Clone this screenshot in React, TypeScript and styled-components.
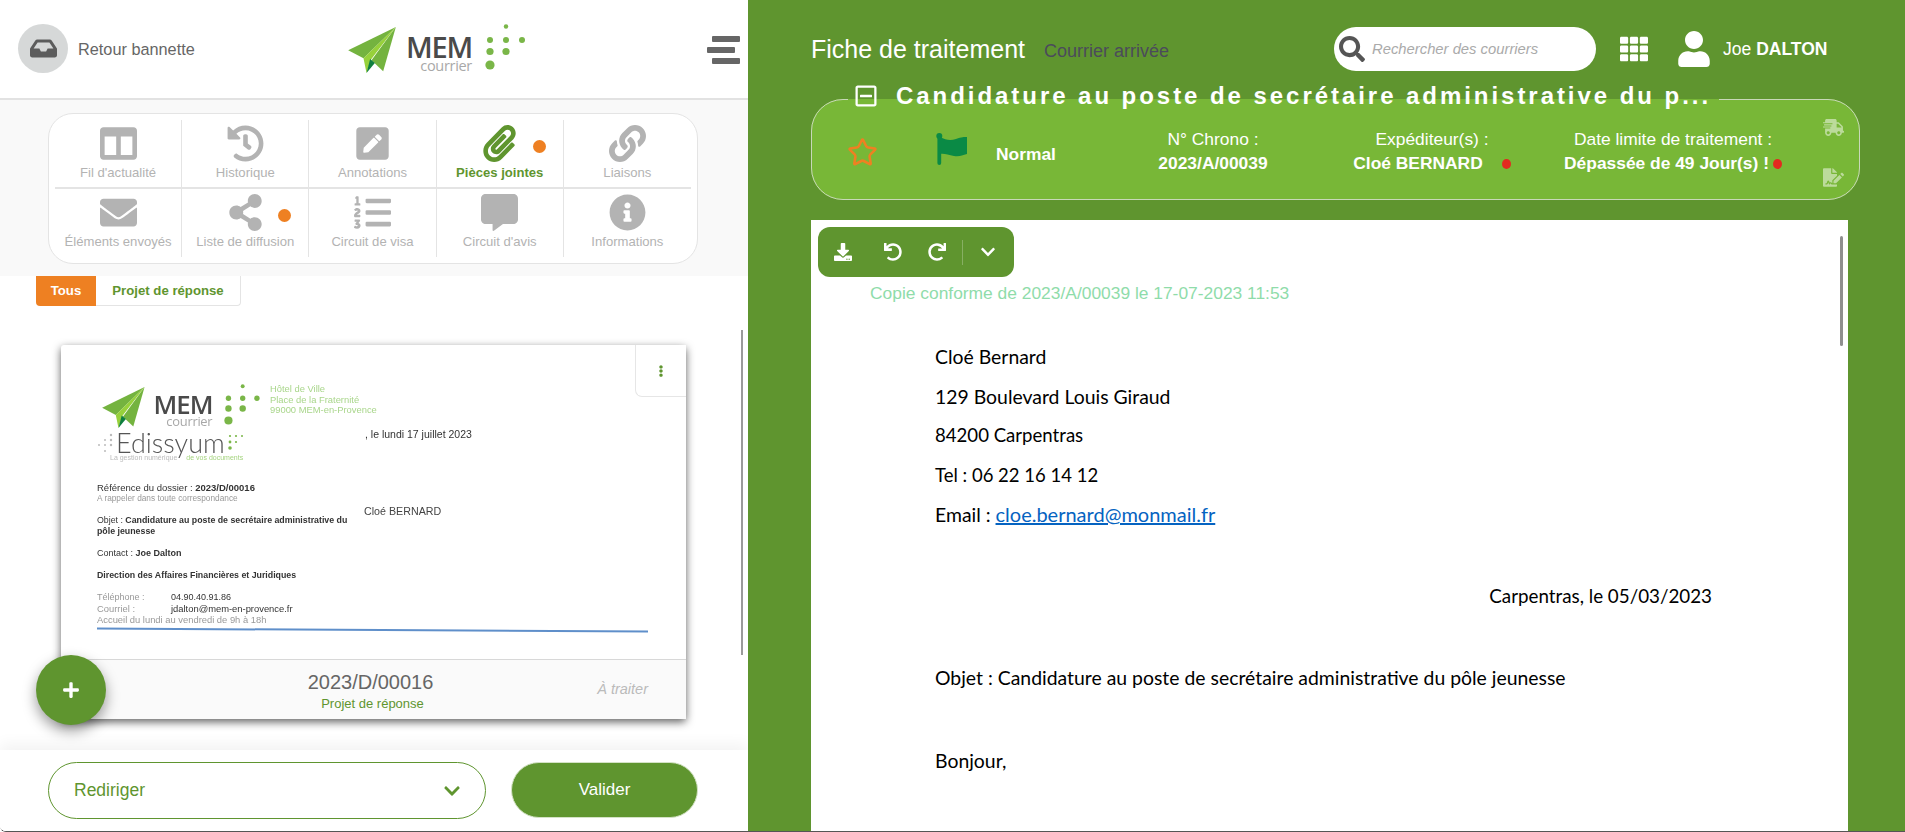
import React from "react";
import styled, { createGlobalStyle } from "styled-components";
import { Star } from "lucide-react";
import {
  FaInbox, FaColumns, FaHistory, FaPenSquare, FaPaperclip, FaLink, FaEnvelope, FaShareAlt, FaListOl,
  FaCommentAlt, FaInfoCircle, FaEllipsisV, FaPlus, FaChevronDown, FaSearch, FaTh, FaUser, FaRegMinusSquare,
  FaShippingFast, FaFileSignature, FaDownload, FaUndo, FaRedo,
} from "react-icons/fa";

const GREEN = "#5f952f";
const sans = `"Liberation Sans", Arial, sans-serif`;

const Global = createGlobalStyle`
  html, body { margin: 0; padding: 0; height: 100%; overflow: hidden; background: #fff; }
  * { box-sizing: border-box; }
  body { font-family: ${sans}; }
`;

const Page = styled.div`
  display: flex; width: 1905px; height: 832px; overflow: hidden; border-bottom: 1px solid #555; border-bottom-left-radius: 6px;
`;

const Left = styled.section`
  position: relative; width: 748px; height: 831px; display: flex; flex-direction: column; background: #fff; overflow: hidden;
`;
const TopBar = styled.header`
  height: 100px; flex: none; display: flex; align-items: center; border-bottom: 2px solid #e2e2e2;
  padding: 0 8px 2px 18px; position: relative; justify-content: space-between;
`;
const BackLink = styled.div`display: flex; align-items: center; gap: 10px; color: #666; font-size: 16.3px; width: 330px;`;
const BackLabel = styled.span`padding-top: 3px;`;
const BackCircle = styled.div`
  width: 50px; height: 49px; border-radius: 50%; background: #d6d8d8; color: #5c5c5c;
  display: flex; align-items: center; justify-content: center; font-size: 27px; margin-top: 1px;
`;
const Burger = styled.div`display: flex; flex-direction: column; width: 33px; gap: 5px; margin-top: 3px;`;
const BurgerBar = styled.span<{ $shift?: boolean }>`
  display: block; width: 28px; height: 6px; background: #666; border-radius: 1px;
  align-self: ${(p) => (p.$shift ? "flex-start" : "flex-end")};
`;
const BrandSlot = styled.div`padding-top: 7px; margin-right: auto;`;

const LogoWrap = styled.div<{ $scale: number }>`
  display: flex; align-items: flex-start; width: 180px; height: 50px; zoom: ${(p) => p.$scale};
`;
const LogoWords = styled.div`
  display: flex; flex-direction: column; align-items: flex-end; margin: 6px 0 0 10px; width: 66px;
  font-family: "Open Sans", sans-serif;
`;
const LogoMem = styled.span`font-size: 29px; line-height: 27px; color: #4a4a4a; font-weight: 600; letter-spacing: -1.2px;`;
const LogoSub = styled.span`font-size: 14.5px; line-height: 15px; color: #a8a8a8; letter-spacing: -.3px; margin-top: -2px;`;
const LogoDots = styled.svg`margin: -3px 0 0 13px; flex: none;`;
const LogoPlane = styled.svg`flex: none;`;

function Logo({ scale }: { scale: number }) {
  return (
    <LogoWrap $scale={scale}>
      <LogoPlane width="48" height="46" viewBox="0 0 143 138">
        <polygon points="0,70 143,0 46,94" fill="#74b33f" />
        <polygon points="143,0 46,94 55,138 68,98" fill="#97d13b" />
        <polygon points="143,0 105,133 70,100" fill="#74b33f" />
        <polygon points="55,138 66,96 80,108" fill="#0f7f3f" />
      </LogoPlane>
      <LogoWords>
        <LogoMem>MEM</LogoMem>
        <LogoSub>courrier</LogoSub>
      </LogoWords>
      <LogoDots width="42" height="46" viewBox="0 0 42 46" fill="#7ab648">
        <circle cx="21" cy="2.5" r="2.2" />
        <circle cx="5" cy="16" r="3" /><circle cx="21" cy="16" r="3" /><circle cx="37" cy="16" r="3" />
        <circle cx="5" cy="27.5" r="3.6" /><circle cx="21" cy="27.5" r="3.6" />
        <circle cx="5" cy="41" r="4.6" />
      </LogoDots>
    </LogoWrap>
  );
}

const TabZone = styled.div`height: 176px; flex: none; background: #f9f9f9; padding: 13px 0 0 48px;`;
const TabBox = styled.nav`
  width: 650px; height: 151px; background: #fff; border: 1px solid #e4e4e4; border-radius: 25px; padding: 6px;
  display: grid; grid-template-columns: repeat(5, 1fr); grid-template-rows: 69px 68px;
`;
const Tab = styled.div<{ $active?: boolean; $lastCol?: boolean; $topRow?: boolean }>`
  position: relative; display: flex; flex-direction: column; align-items: center; justify-content: flex-start;
  color: ${(p) => (p.$active ? GREEN : "#b3b3b3")}; font-size: 13.1px; font-weight: ${(p) => (p.$active ? 700 : 400)};
  border-right: ${(p) => (p.$lastCol ? "none" : "1px solid #e4e4e4")};
  border-bottom: ${(p) => (p.$topRow ? "2px solid #e4e4e4" : "none")};
  padding-top: 5px;
`;
const TabIcon = styled.div`height: 37px; display: flex; align-items: center; justify-content: center; font-size: 37px; margin-bottom: 3px;`;
const Dot = styled.span`
  position: absolute; right: 17px; top: 20px; width: 13px; height: 13px; border-radius: 50%; background: #ee8022;
`;

const ListZone = styled.div`position: relative; flex: 1; min-height: 0; background: #fff;`;
const Filter = styled.div`display: flex; height: 30px; margin-left: 36px; width: fit-content; font-size: 13.2px; font-weight: 700;`;
const FilterOn = styled.div`
  width: 60px; background: #ee8022; color: #fff; display: flex; align-items: center; justify-content: center;
  border-radius: 0 0 0 4px; padding-bottom: 1px;
`;
const FilterOff = styled.div`
  width: 145px; background: #fff; color: ${GREEN}; display: flex; align-items: center; justify-content: center;
  border: 1px solid #e4e4e4; border-top: none; border-left: none; border-radius: 0 0 4px 0; padding-bottom: 1px;
`;
const Card = styled.article`
  position: relative; width: 625px; height: 374px; margin: 39px 0 0 61px; border-radius: 3px; background: #fff;
  box-shadow: 0 3px 9px rgba(0, 0, 0, .62); display: flex; flex-direction: column;
`;
const CardMenu = styled.div`
  position: absolute; top: 0; right: 0; width: 51px; height: 52px; background: #fff; color: ${GREEN}; font-size: 12px;
  border-left: 1px solid #e6e6e6; border-bottom: 1px solid #e6e6e6; border-bottom-left-radius: 7px;
  display: flex; align-items: center; justify-content: center;
`;
const Thumb = styled.div`flex: 1; padding: 42px 38px 0 36px; filter: blur(.45px); font-family: ${sans}; overflow: hidden;`;
const ThumbHead = styled.div`display: flex; height: 95px;`;
const ThumbBrand = styled.div`width: 173px; padding-left: 5px; flex: none;`;
const EdissyumRow = styled.div`display: flex; align-items: center; margin-left: -6px; height: 22px;`;
const Edissyum = styled.div`
  font-family: Lato, sans-serif; font-weight: 300; font-size: 27px; line-height: 22px; color: #555; margin: 0 2px 0 2px;
`;
const EdDots = styled.svg`flex: none;`;
const Tagline = styled.div`font-size: 7px; line-height: 8px; color: #bbb; margin-left: 8px; white-space: nowrap;`;
const TagGreen = styled.span`color: #a5d47f; margin-left: 9px;`;
const ThumbAddr = styled.div`display: flex; flex-direction: column; font-size: 9.4px; line-height: 10.6px; color: #a9d68b; margin-top: -3px;`;
const ThumbDate = styled.div`font-size: 10.5px; color: #333; margin: 13px 0 0 95px; white-space: nowrap;`;
const ThumbBody = styled.div`display: grid; grid-template-columns: 267px 1fr;`;
const ThumbLine = styled.div<{ $gray?: boolean; $gap?: number; $size?: number }>`
  font-size: ${(p) => p.$size ?? 9.4}px; line-height: 11px; color: ${(p) => (p.$gray ? "#999" : "#333")}; margin-top: ${(p) => p.$gap ?? 0}px;
  white-space: nowrap;
`;
const ThumbLabel = styled.span`display: inline-block; width: 74px;`;
const ThumbDark = styled.span`color: #333;`;
const ThumbTo = styled.div`font-size: 10.7px; color: #444; padding-top: 23px;`;
const ThumbRule = styled.div`height: 2px; background: #5f8fca; margin: 4px 0 0 0; width: 551px; transform: rotate(.3deg);`;
const CardFoot = styled.footer`
  position: relative; height: 60px; flex: none; background: #fafafa; border-top: 1px solid #d8d8d8;
  display: flex; flex-direction: column; align-items: center; padding: 11px 4px 0 0;
`;
const Chrono = styled.div`font-size: 20px; line-height: 22px; color: #666; margin-right: 2px;`;
const DocKind = styled.div`font-size: 13px; line-height: 16px; color: ${GREEN}; margin: 3px 0 0 2px;`;
const Status = styled.div`position: absolute; right: 38px; top: 21px; font-size: 14.5px; font-style: italic; color: #bbb;`;
const Fab = styled.button`
  position: absolute; left: 36px; top: 379px; width: 70px; height: 70px; border: none; border-radius: 50%; background: ${GREEN};
  color: #fff; font-size: 18px; display: flex; align-items: center; justify-content: center;
  box-shadow: 0 6px 14px rgba(0, 0, 0, .4);
`;
const ScrollLeft = styled.div`position: absolute; right: 5px; top: 54px; width: 2px; height: 325px; background: #9a9a9a;`;

const ActionBar = styled.div`
  position: relative; height: 81px; flex: none; background: #fff; display: flex; gap: 25px; padding: 12px 0 0 48px;
  box-shadow: 0 -6px 14px rgba(0, 0, 0, .05);
`;
const RedirectSelect = styled.div`
  width: 438px; height: 57px; border: 1px solid ${GREEN}; border-radius: 29px; color: ${GREEN}; font-size: 17.5px;
  display: flex; align-items: center; justify-content: space-between; padding: 0 24px 0 25px;
`;
const Validate = styled.button`
  width: 187px; height: 56px; border: 1px solid #d4e2c6; border-radius: 28px; background: ${GREEN}; color: #fff;
  font: 17px ${sans};
`;

const Right = styled.main`flex: 1; height: 831px; background: ${GREEN}; padding: 27px 45px 0 63px; display: flex; flex-direction: column; overflow: hidden;`;
const RightTop = styled.div`display: flex; align-items: center; height: 44px; color: #fff;`;
const PageTitle = styled.h1`font-size: 25px; font-weight: 400; margin: 0; line-height: 44px; white-space: nowrap;`;
const PageSub = styled.span`font-size: 18px; color: #4b4b5b; margin: 4px 0 0 19px; white-space: nowrap;`;
const Search = styled.div`
  margin-left: 165px; width: 262px; height: 44px; border-radius: 22px; background: #fff; display: flex; align-items: center;
  padding-left: 5px; color: #555; font-size: 26px; flex: none;
`;
const SearchText = styled.span`font-size: 14.8px; font-style: italic; color: #aaa; margin-left: 7px;`;
const Apps = styled.div`margin-left: 24px; font-size: 28px; display: flex; flex: none;`;
const UserIcon = styled.div`margin-left: 28px; font-size: 36px; display: flex; flex: none;`;
const UserName = styled.span`font-size: 17.5px; margin-left: 11px; white-space: nowrap;`;
const Strong = styled.b`font-weight: 700;`;

const Info = styled.fieldset`
  margin: 13px 0 0 0; padding: 0 0 4px 36px; width: 1049px; height: 116px; flex: none; min-width: 0; background: #78b737;
  border: 1px solid #c8d8b8; border-radius: 32px; display: flex; align-items: center; color: #fff; position: relative;
`;
const InfoLegend = styled.legend`
  margin-left: 0; padding: 0 8px 6px 6px; display: flex; align-items: center; gap: 18px; color: #fff; height: 30px;
  font-size: 24px; font-weight: 700; letter-spacing: 2.95px; white-space: nowrap;
`;
const StarCell = styled.div`width: 89px; color: #ee8022; display: flex; flex: none; margin: 2px 0 0 -1px;`;
const FlagCell = styled.div`width: 200px; flex: none; display: flex; align-items: center;`;
const FlagMark = styled.svg`margin-top: -4px; flex: none;`;
const FlagLabel = styled.span`font-size: 17.4px; font-weight: 700; color: #fff; margin: 6px 0 0 28px;`;
const InfoCol = styled.div<{ $w: number; $gap?: number }>`
  width: ${(p) => p.$w}px; margin-left: ${(p) => p.$gap ?? 0}px; flex: none; text-align: center; font-size: 17.4px; line-height: 24px; white-space: nowrap;
`;
const InfoValue = styled.div`font-weight: 700;`;
const Alert = styled.span<{ $gap: number }>`
  display: inline-block; width: 9px; height: 10px; border-radius: 50%; background: #e3291f; margin-left: ${(p) => p.$gap}px;
`;
const SideActions = styled.div`
  display: flex; flex-direction: column; gap: 29px; margin: 3px 0 0 36px; color: rgba(255, 255, 255, .5); font-size: 21px;
`;

const Doc = styled.div`position: relative; flex: 1; width: 1037px; min-height: 0; margin-top: 20px; background: #fff; padding: 7px 0 0 7px; overflow: hidden;`;
const DocBar = styled.div`
  width: 196px; height: 50px; background: ${GREEN}; border-radius: 12px; color: #fff; display: flex; align-items: center; font-size: 18px;
  padding-left: 16px;
`;
const DocBtn = styled.span<{ $w: number }>`width: ${(p) => p.$w}px; display: flex; flex: none;`;
const DocSep = styled.span`width: 1px; height: 25px; background: rgba(255, 255, 255, .25); margin: 0 17px 0 0; flex: none;`;
const Conform = styled.div`font-size: 17.4px; line-height: 20px; color: #8fdcaa; margin: 6px 0 0 52px; white-space: nowrap;`;
const Letter = styled.div`margin: 34px 0 0 117px; width: 777px; font-family: Lato, sans-serif; font-size: 19.4px; line-height: 39.5px; color: #000;`;
const LetterLine = styled.div<{ $gap?: number; $right?: boolean; $size?: number }>`
  margin-top: ${(p) => p.$gap ?? 0}px; text-align: ${(p) => (p.$right ? "right" : "left")}; white-space: nowrap;
  font-size: ${(p) => p.$size ?? 19.4}px;
`;
const Mail = styled.a`color: #0563c1; text-decoration: underline; font-size: 20px;`;
const DocScroll = styled.div`position: absolute; right: 5px; top: 16px; width: 3px; height: 110px; border-radius: 2px; background: #8f8f8f;`;

const tabs = [
  { label: "Fil d'actualité", icon: <FaColumns /> },
  { label: "Historique", icon: <FaHistory /> },
  { label: "Annotations", icon: <FaPenSquare /> },
  { label: "Pièces jointes", icon: <FaPaperclip />, active: true, dot: true },
  { label: "Liaisons", icon: <FaLink /> },
  { label: "Éléments envoyés", icon: <FaEnvelope /> },
  { label: "Liste de diffusion", icon: <FaShareAlt />, dot: true },
  { label: "Circuit de visa", icon: <FaListOl /> },
  { label: "Circuit d'avis", icon: <FaCommentAlt /> },
  { label: "Informations", icon: <FaInfoCircle /> },
];

export default function App() {
  return (
    <Page>
      <Global />
      <Left>
        <TopBar>
          <BackLink>
            <BackCircle><FaInbox /></BackCircle>
            <BackLabel>Retour bannette</BackLabel>
          </BackLink>
          <BrandSlot><Logo scale={1} /></BrandSlot>
          <Burger>
            <BurgerBar />
            <BurgerBar $shift />
            <BurgerBar />
          </Burger>
        </TopBar>
        <TabZone>
          <TabBox>
            {tabs.map((t, i) => (
              <Tab key={t.label} $active={t.active} $lastCol={i % 5 === 4} $topRow={i < 5}>
                <TabIcon>{t.icon}</TabIcon>
                {t.label}
                {t.dot && <Dot />}
              </Tab>
            ))}
          </TabBox>
        </TabZone>
        <ListZone>
          <Filter>
            <FilterOn>Tous</FilterOn>
            <FilterOff>Projet de réponse</FilterOff>
          </Filter>
          <Card>
            <Thumb>
              <ThumbHead>
                <ThumbBrand>
                  <Logo scale={0.89} />
                  <EdissyumRow>
                    <EdDots width="18" height="22" viewBox="0 0 18 22" fill="#bbb">
                      <circle cx="15" cy="3" r="1.2" /><circle cx="15" cy="8" r="1.2" /><circle cx="15" cy="13" r="1.2" />
                      <circle cx="9" cy="8" r="1" /><circle cx="9" cy="13" r="1" /><circle cx="3" cy="13" r="1" /><circle cx="9" cy="19" r="1" />
                    </EdDots>
                    <Edissyum>Edissyum</Edissyum>
                    <EdDots width="18" height="22" viewBox="0 0 18 22" fill="#7ab648">
                      <circle cx="3" cy="16" r="1.8" /><circle cx="3" cy="10" r="1.4" /><circle cx="9" cy="10" r="1.1" />
                      <circle cx="9" cy="4" r="1.1" /><circle cx="3" cy="4" r="1.1" /><circle cx="15" cy="4" r="1" />
                    </EdDots>
                  </EdissyumRow>
                  <Tagline>La gestion numérique<TagGreen>de vos documents</TagGreen></Tagline>
                </ThumbBrand>
                <ThumbAddr>
                  <span>Hôtel de Ville</span>
                  <span>Place de la Fraternité</span>
                  <span>99000 MEM-en-Provence</span>
                  <ThumbDate>, le lundi 17 juillet 2023</ThumbDate>
                </ThumbAddr>
              </ThumbHead>
              <ThumbBody>
                <div>
                  <ThumbLine $size={9.5}>Référence du dossier : <Strong>2023/D/00016</Strong></ThumbLine>
                  <ThumbLine $gray $size={8.3}>A rappeler dans toute correspondance</ThumbLine>
                  <ThumbLine $gap={11} $size={8.8}>Objet : <Strong>Candidature au poste de secrétaire administrative du</Strong></ThumbLine>
                  <ThumbLine $size={8.8}><Strong>pôle jeunesse</Strong></ThumbLine>
                  <ThumbLine $gap={11} $size={9}>Contact : <Strong>Joe Dalton</Strong></ThumbLine>
                  <ThumbLine $gap={11} $size={8.8}><Strong>Direction des Affaires Financières et Juridiques</Strong></ThumbLine>
                </div>
                <ThumbTo>Cloé BERNARD</ThumbTo>
              </ThumbBody>
              <ThumbLine $gray $gap={11} $size={9}><ThumbLabel>Téléphone :</ThumbLabel><ThumbDark>04.90.40.91.86</ThumbDark></ThumbLine>
              <ThumbLine $gray><ThumbLabel>Courriel :</ThumbLabel><ThumbDark>jdalton@mem-en-provence.fr</ThumbDark></ThumbLine>
              <ThumbLine $gray>Accueil du lundi au vendredi de 9h à 18h</ThumbLine>
              <ThumbRule />
            </Thumb>
            <CardMenu><FaEllipsisV /></CardMenu>
            <CardFoot>
              <Chrono>2023/D/00016</Chrono>
              <DocKind>Projet de réponse</DocKind>
              <Status>À traiter</Status>
            </CardFoot>
          </Card>
          <Fab aria-label="Ajouter"><FaPlus /></Fab>
          <ScrollLeft />
        </ListZone>
        <ActionBar>
          <RedirectSelect>Rediriger <FaChevronDown size={18} /></RedirectSelect>
          <Validate>Valider</Validate>
        </ActionBar>
      </Left>
      <Right>
        <RightTop>
          <PageTitle>Fiche de traitement</PageTitle>
          <PageSub>Courrier arrivée</PageSub>
          <Search><FaSearch /><SearchText>Rechercher des courriers</SearchText></Search>
          <Apps><FaTh /></Apps>
          <UserIcon><FaUser /></UserIcon>
          <UserName>Joe <Strong>DALTON</Strong></UserName>
        </RightTop>
        <Info>
          <InfoLegend><FaRegMinusSquare />Candidature au poste de secrétaire administrative du p...</InfoLegend>
          <StarCell><Star size={31} strokeWidth={2} /></StarCell>
          <FlagCell>
            <FlagMark width="32" height="32" viewBox="0 0 32 32" fill="#0a8a45">
              <circle cx="3.3" cy="3" r="3" />
              <rect x="1.4" y="3" width="3.8" height="29" rx="1.9" />
              <path d="M4 4 C10 7 14 8 20 6 S28 4 31 4 L31 21 C26 22 24 24 18 23 S8 20 4 21 Z" />
            </FlagMark>
            <FlagLabel>Normal</FlagLabel>
          </FlagCell>
          <InfoCol $w={154}>N° Chrono :<InfoValue>2023/A/00039</InfoValue></InfoCol>
          <InfoCol $w={182} $gap={51}>Expéditeur(s) :<InfoValue>Cloé BERNARD<Alert $gap={19} /></InfoValue></InfoCol>
          <InfoCol $w={228} $gap={36}>Date limite de traitement :<InfoValue>Dépassée de 49 Jour(s) !<Alert $gap={4} /></InfoValue></InfoCol>
          <SideActions><FaShippingFast /><FaFileSignature /></SideActions>
        </Info>
        <Doc>
          <DocBar>
            <DocBtn $w={50}><FaDownload /></DocBtn>
            <DocBtn $w={44}><FaUndo /></DocBtn>
            <DocBtn $w={34}><FaRedo /></DocBtn>
            <DocSep />
            <FaChevronDown size={16} />
          </DocBar>
          <Conform>Copie conforme de 2023/A/00039 le 17-07-2023 11:53</Conform>
          <Letter>
            <LetterLine>Cloé Bernard</LetterLine>
            <LetterLine>129 Boulevard Louis Giraud</LetterLine>
            <LetterLine $size={18.6}>84200 Carpentras</LetterLine>
            <LetterLine $size={18.5}>Tel : 06 22 16 14 12</LetterLine>
            <LetterLine>Email : <Mail>cloe.bernard@monmail.fr</Mail></LetterLine>
            <LetterLine $gap={41} $right $size={18.8}>Carpentras, le 05/03/2023</LetterLine>
            <LetterLine $gap={43}>Objet : Candidature au poste de secrétaire administrative du pôle jeunesse</LetterLine>
            <LetterLine $gap={43}>Bonjour,</LetterLine>
          </Letter>
          <DocScroll />
        </Doc>
      </Right>
    </Page>
  );
}
